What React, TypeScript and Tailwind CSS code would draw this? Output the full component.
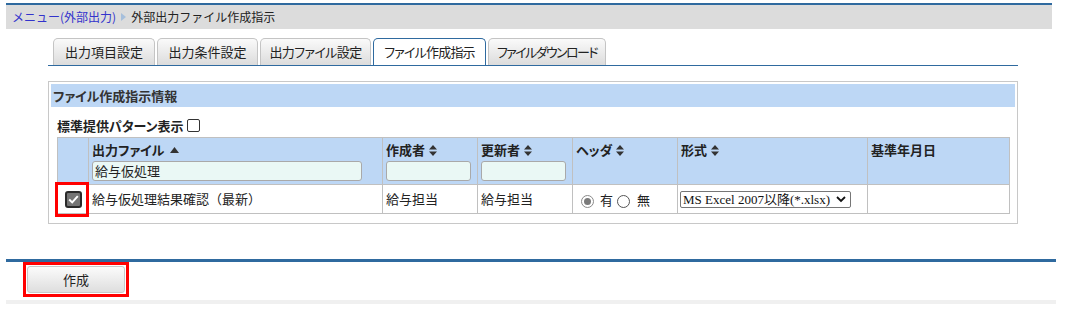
import React from "react";

function SortUp() {
  return (
    <svg width="9" height="6" viewBox="0 0 9 6">
      <path d="M4.5 0 L9 6 H0 Z" fill="#333" />
    </svg>
  );
}

function SortBoth() {
  return (
    <svg width="8" height="11" viewBox="0 0 8 11">
      <path d="M4 0 L8 4.5 H0 Z M0 6.5 H8 L4 11 Z" fill="#333" />
    </svg>
  );
}

function Tab({ label, w, active }: { label: string; w: string; active?: boolean }) {
  return (
    <div
      className={
        active
          ? "h-[27px] flex items-center justify-center whitespace-nowrap rounded-t-[5px] border border-b-0 border-[#2f6a9f] bg-white text-[13px] text-[#222] [font-feature-settings:'palt'] " + w
          : "h-[27px] flex items-center justify-center whitespace-nowrap rounded-t-[5px] border border-b-0 border-[#c4c4c4] bg-linear-to-b from-[#fafafa] to-[#dcdcdc] text-[13px] text-[#222] [font-feature-settings:'palt'] " + w
      }
    >
      {label}
    </div>
  );
}

function Radio({ checked }: { checked?: boolean }) {
  return checked ? (
    <div className="w-[13px] h-[13px] rounded-full border border-[#8a8a8a] bg-white flex items-center justify-center">
      <div className="w-[7px] h-[7px] rounded-full bg-[#7a7a7a]" />
    </div>
  ) : (
    <div className="w-[13px] h-[13px] rounded-full border border-[#555] bg-white" />
  );
}

export default function App() {
  return (
    <div className="w-[1068px] h-[312px] bg-white overflow-hidden pt-[3px] text-[#333] font-['Noto_Sans_CJK_JP','Noto_Sans',sans-serif]">
      {/* breadcrumb bar */}
      <div className="ml-[6px] w-[1046px] h-[26px] border-t-2 border-[#2f6a9f] bg-[#dcdcdc] flex items-center pl-[6px] text-[12px] leading-[16px]">
        <span className="text-[#3333cc]">メニュー(外部出力)</span>
        <svg className="ml-[5px] mr-[5px]" width="5" height="8" viewBox="0 0 5 8">
          <path d="M0 0 L5 4 L0 8 Z" fill="#a6bfdc" />
        </svg>
        <span className="text-[#222]">外部出力ファイル作成指示</span>
      </div>

      {/* tabs */}
      <div className="mt-[9px] ml-[48px] w-[970px] border-b border-[#2f6a9f] flex items-end pl-[5px] gap-[2px]">
        <Tab label="出力項目設定" w="w-[102px]" />
        <Tab label="出力条件設定" w="w-[101px]" />
        <Tab label="出力ファイル設定" w="w-[111px] tracking-[-0.6px]" />
        <Tab label="ファイル作成指示" w="w-[113px] tracking-[-0.8px]" active />
        <Tab label="ファイルダウンロード" w="w-[118px] tracking-[-1.6px]" />
      </div>

      {/* panel */}
      <div className="mt-[15px] ml-[48px] w-[970px] border border-[#c8c8c8] p-[2px]">
        <div className="h-[23px] bg-[#bdd7f5] flex items-center pl-[2px] font-bold text-[13px] text-[#333] [font-feature-settings:'palt']">
          ファイル作成指示情報
        </div>
        <div className="h-[30px] flex items-end pl-[6px] pb-[2px]">
          <span className="font-bold text-[13px] leading-[18px] text-[#222] [font-feature-settings:'palt']">標準提供パターン表示</span>
          <div className="ml-[3px] mb-[3px] w-[13px] h-[13px] rounded-[2px] border border-[#333] bg-white" />
        </div>

        {/* table */}
        <div className="ml-[6px] mb-[7px] w-[953px] border-l border-t border-[#c0c0c0] text-[13px] text-[#222]">
          <div className="grid grid-cols-[31px_294px_95px_95px_105px_190px_142px] h-[47px] bg-[#bdd7f5] [font-feature-settings:'palt']">
            <div className="border-r border-b border-[#c0c0c0]" />
            <div className="border-r border-b border-[#c0c0c0] pl-[3px] pt-[4px]">
              <div className="flex items-center gap-[6px] font-bold leading-[16px]">
                出力ファイル <SortUp />
              </div>
              <div className="mt-[3px] h-[20px] w-[270px] rounded-[3px] border border-[#a9a9a9] bg-[#eaf8f5] px-[2px] leading-[18px]">
                給与仮処理
              </div>
            </div>
            <div className="border-r border-b border-[#c0c0c0] pl-[3px] pt-[4px]">
              <div className="flex items-center gap-[4px] font-bold leading-[16px]">
                作成者 <SortBoth />
              </div>
              <div className="mt-[3px] h-[20px] w-[85px] rounded-[3px] border border-[#a9a9a9] bg-[#eaf8f5]" />
            </div>
            <div className="border-r border-b border-[#c0c0c0] pl-[3px] pt-[4px]">
              <div className="flex items-center gap-[4px] font-bold leading-[16px]">
                更新者 <SortBoth />
              </div>
              <div className="mt-[3px] h-[20px] w-[85px] rounded-[3px] border border-[#a9a9a9] bg-[#eaf8f5]" />
            </div>
            <div className="border-r border-b border-[#c0c0c0] pl-[3px] pt-[4px]">
              <div className="flex items-center gap-[4px] font-bold leading-[16px]">
                ヘッダ <SortBoth />
              </div>
            </div>
            <div className="border-r border-b border-[#c0c0c0] pl-[3px] pt-[4px]">
              <div className="flex items-center gap-[4px] font-bold leading-[16px]">
                形式 <SortBoth />
              </div>
            </div>
            <div className="border-r border-b border-[#c0c0c0] pl-[3px] pt-[4px]">
              <div className="font-bold leading-[16px]">基準年月日</div>
            </div>
          </div>

          <div className="grid grid-cols-[31px_294px_95px_95px_105px_190px_142px] h-[29px] bg-white">
            <div className="relative border-r border-b border-[#c0c0c0] flex items-center justify-center">
              <div className="w-[17px] h-[17px] rounded-[3px] border-2 border-[#2a2a2a] bg-[#747474] flex items-center justify-center">
                <svg width="11" height="9" viewBox="0 0 11 9">
                  <path d="M1.2 4.6 L4.2 7.4 L9.8 1.2" stroke="#fff" strokeWidth="2" fill="none" />
                </svg>
              </div>
              <div className="absolute -left-[3px] -top-[3px] w-[34px] h-[35px] border-[3px] border-[#ff0000]" />
            </div>
            <div className="border-r border-b border-[#c0c0c0] flex items-center pl-[3px]">
              給与仮処理結果確認（最新）
            </div>
            <div className="border-r border-b border-[#c0c0c0] flex items-center pl-[3px]">給与担当</div>
            <div className="border-r border-b border-[#c0c0c0] flex items-center pl-[3px]">給与担当</div>
            <div className="border-r border-b border-[#c0c0c0] flex items-center pl-[8px] pt-[4px]">
              <Radio checked />
              <span className="ml-[6px] mb-[3px]">有</span>
              <div className="ml-[4px]">
                <Radio />
              </div>
              <span className="ml-[7px] mb-[3px]">無</span>
            </div>
            <div className="border-r border-b border-[#c0c0c0] flex items-center pl-[2px]">
              <div className="h-[17px] w-[171px] rounded-[2px] border border-[#767676] bg-white flex items-center pl-[2px] pr-[4px] font-['Liberation_Serif','Noto_Sans_CJK_JP',serif] text-[13px] leading-[15px] text-[#111]">
                <span className="flex-1 whitespace-nowrap">MS Excel 2007以降(*.xlsx)</span>
                <svg width="10" height="7" viewBox="0 0 10 7">
                  <path d="M1 1 L5 5 L9 1" stroke="#111" strokeWidth="1.8" fill="none" />
                </svg>
              </div>
            </div>
            <div className="border-r border-b border-[#c0c0c0]" />
          </div>
        </div>
      </div>

      {/* bottom action bar */}
      <div className="mt-[35px] ml-[6px] w-[1050px] h-[3px] bg-[#2f6a9f]" />
      <div className="ml-[23px] w-[106px] h-[35px] border-[3px] border-[#ff0000] p-[1px]">
        <div className="h-full w-full rounded-[3px] border border-[#c8c8c8] bg-linear-to-b from-[#fbfbfb] to-[#dedede] flex items-center justify-center text-[13px] text-[#222]">
          作成
        </div>
      </div>
      <div className="mt-[3px] ml-[6px] w-[1050px] h-[4px] bg-[#f0f0f0]" />
    </div>
  );
}
